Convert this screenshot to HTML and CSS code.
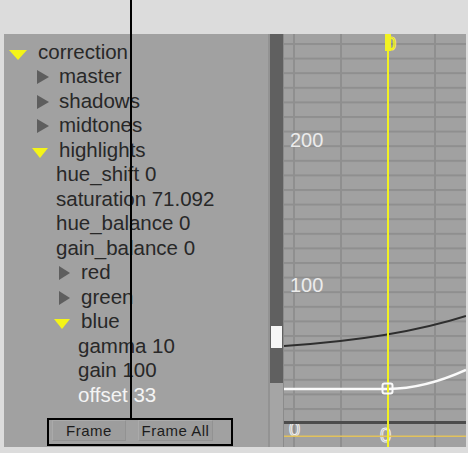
FILE: index.html
```html
<!DOCTYPE html>
<html lang="en">
<head>
  <meta charset="utf-8" />
  <title>Curves - correction</title>
  <link rel="stylesheet" href="styles.css">
</head>
<body>

  <div class="callout"></div>

  <div class="window">
    <div class="tree-pane">
      <ul class="tree">
        <li class="row r-root"><span class="caret open big"></span>correction</li>
        <li class="row r-group"><span class="caret closed"></span>master</li>
        <li class="row r-group"><span class="caret closed"></span>shadows</li>
        <li class="row r-group"><span class="caret closed"></span>midtones</li>
        <li class="row r-open"><span class="caret open"></span>highlights</li>
        <li class="row r-leaf">hue_shift 0</li>
        <li class="row r-leaf">saturation 71.092</li>
        <li class="row r-leaf">hue_balance 0</li>
        <li class="row r-leaf">gain_balance 0</li>
        <li class="row r-sub"><span class="caret closed sm"></span>red</li>
        <li class="row r-sub"><span class="caret closed sm"></span>green</li>
        <li class="row r-subopen"><span class="caret open"></span>blue</li>
        <li class="row r-subleaf">gamma 10</li>
        <li class="row r-subleaf">gain 100</li>
        <li class="row r-subleaf selected">offset 33</li>
      </ul>

      <div class="actions">
        <button class="btn">Frame</button>
        <button class="btn">Frame All</button>
      </div>
    </div>

    <div class="scroll">
      <div class="scroll-track"><div class="thumb"></div></div>
      <div class="scroll-rest"></div>
    </div>

    <svg class="graph" width="182" height="413" viewBox="0 0 182 413">
      <defs>
        <pattern id="rows" x="0" y="9" width="182" height="14.6" patternUnits="userSpaceOnUse">
          <rect x="0" y="0" width="182" height="2" fill="#8f8f8f" />
        </pattern>
      </defs>
      <rect x="0" y="9" width="182" height="369" fill="url(#rows)" />
      <rect x="9" y="0" width="2" height="413" fill="#8f8f8f" />
      <rect x="56" y="0" width="2" height="413" fill="#8f8f8f" />
      <rect x="150" y="0" width="2" height="413" fill="#8f8f8f" />

      <text class="axis" x="6" y="113">200</text>
      <text class="axis" x="6" y="258">100</text>

      <!-- curves -->
      <path d="M0 312 Q110 305 182 282" fill="none" stroke="#2e2e2e" stroke-width="2" />
      <path d="M0 355 H104 Q140 355 182 336" fill="none" stroke="#fafafa" stroke-width="2.5" />

      <text class="axis hollow" x="5" y="402">0</text>
      <text class="axis hollow" x="96" y="408">0</text>
      <rect x="0" y="387" width="182" height="3" fill="#4c4c4c" />
      <rect x="0" y="401.5" width="182" height="1.5" fill="#e2c25c" />

      <!-- current frame -->
      <rect x="103" y="10" width="2" height="403" fill="#f2f222" />
      <rect x="101" y="0" width="6" height="17" fill="#f2f222" />
      <text class="marker" x="102" y="16">0</text>
      <rect x="98.5" y="349.5" width="10" height="10" rx="2" fill="none" stroke="#fafafa" stroke-width="2" />
    </svg>
  </div>

</body>
</html>
```

FILE: styles.css
```css
body {
  margin: 0;
  width: 468px;
  height: 453px;
  overflow: hidden;
  background-color: #dcdcdc;
  font-family: "Liberation Sans", Arial, sans-serif;
  position: relative;
}

/* the pointer line from the caption down to the buttons */
.callout {
  position: absolute;
  left: 130px;
  top: 0;
  width: 2px;
  height: 418px;
  background: #000;
  z-index: 10;
}

.window {
  margin: 34px 0 0 4px;
  width: 462px;
  height: 413px;
  display: flex;
  background-color: #a1a1a1;
}

.tree-pane {
  width: 264px;
  display: flex;
  flex-direction: column;
}

.tree {
  list-style: none;
  margin: 0;
  padding: 5.5px 0 0;
  font-size: 20.5px;
  color: #282828;
}

.row {
  height: 24.5px;
  line-height: 24.5px;
  display: flex;
  align-items: center;
  white-space: nowrap;
}

.r-root { padding-left: 5px; }
.r-group { padding-left: 33px; }
.r-open { padding-left: 28px; }
.r-leaf { padding-left: 52px; }
.r-sub { padding-left: 55px; }
.r-subopen { padding-left: 50px; }
.r-subleaf { padding-left: 74px; }

.selected {
  color: #f4f4f4;
}

.caret {
  display: inline-block;
  width: 0;
  height: 0;
  flex: none;
}

.caret.open {
  border-left: 8px solid transparent;
  border-right: 8px solid transparent;
  border-top: 10px solid #f4f418;
  margin-top: 6px;
  margin-right: 11px;
}

.caret.open.big {
  border-left-width: 9px;
  border-right-width: 9px;
}

.caret.closed {
  border-top: 7px solid transparent;
  border-bottom: 7px solid transparent;
  border-left: 12px solid #5e5e5e;
  margin-top: 2px;
  margin-right: 10px;
}

.caret.closed.sm {
  border-left-width: 11px;
  margin-right: 11px;
}

.actions {
  margin: 11px 0 0 43px;
  width: 186px;
  height: 28px;
  box-sizing: border-box;
  border: 2px solid #000;
  display: flex;
  gap: 12px;
  padding-left: 3px;
}

.btn {
  width: 74px;
  height: 21px;
  box-sizing: border-box;
  padding: 0;
  border: 1px solid #929292;
  border-top-color: #aaaaaa;
  border-left-color: #aaaaaa;
  background: #9d9d9d;
  color: #1c1c1c;
  font-family: "Liberation Sans", Arial, sans-serif;
  font-size: 15px;
  letter-spacing: 0.5px;
  line-height: 19px;
}

.btn + .btn {
  width: 75px;
}

.scroll {
  width: 16px;
  display: flex;
  flex-direction: column;
  box-sizing: border-box;
  border-left: 2px solid #939393;
  border-right: 1px solid #8b8b8b;
}

.scroll-track {
  flex: 0 0 349px;
  box-sizing: border-box;
  padding-top: 292px;
  background: #606060;
}

.thumb {
  height: 22px;
  margin: 0 1px;
  background: #f6f6f6;
}

.scroll-rest {
  flex: 1;
  background: #a5a5a5;
}

.graph {
  display: block;
  flex: none;
}

.axis {
  font-family: "Liberation Sans", Arial, sans-serif;
  font-size: 20px;
  fill: #ececec;
}

.hollow {
  fill: none;
  stroke: #f0f0f0;
  stroke-width: 1;
}

.marker {
  font-family: "Liberation Sans", Arial, sans-serif;
  font-size: 18px;
  fill: none;
  stroke: #f2f222;
  stroke-width: 1.2;
}
```
